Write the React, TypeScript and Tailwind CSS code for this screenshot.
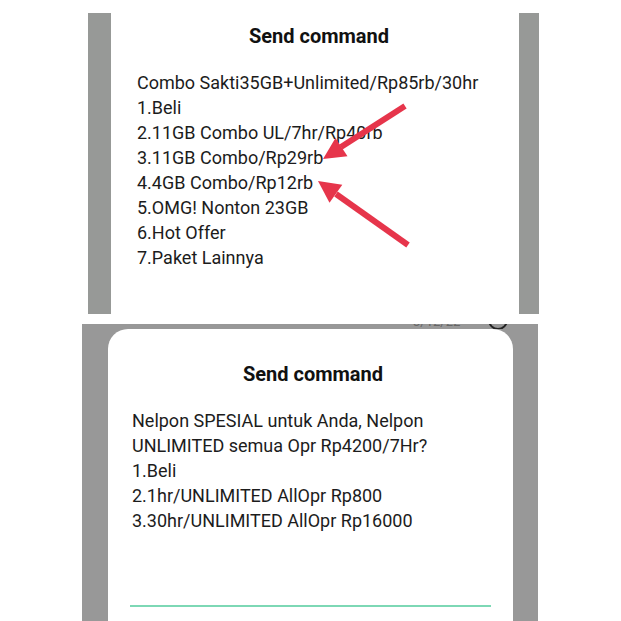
import React from 'react';

const font = { fontFamily: 'Roboto, "Noto Sans", Arial, sans-serif' };

const topLines = [
    'Combo Sakti35GB+Unlimited/Rp85rb/30hr',
    '1.Beli',
    '2.11GB Combo UL/7hr/Rp40rb',
    '3.11GB Combo/Rp29rb',
    '4.4GB Combo/Rp12rb',
    '5.OMG! Nonton 23GB',
    '6.Hot Offer',
    '7.Paket Lainnya',
];

const bottomLines = [
    'Nelpon SPESIAL untuk Anda, Nelpon',
    'UNLIMITED semua Opr Rp4200/7Hr?',
    '1.Beli',
    '2.1hr/UNLIMITED AllOpr Rp800',
    '3.30hr/UNLIMITED AllOpr Rp16000',
];

const App: React.FC = () => {
    return (
        <div className="relative w-[621px] h-[621px] overflow-hidden bg-white" style={font}>
            {/* Top screenshot */}
            <div className="pt-[13px] pl-[88px]">
                <div className="flex w-[451px] h-[301px]">
                    <div className="w-[23px] bg-[#979997]" />
                    <div className="flex-1 bg-white pt-[9px]">
                        <h2 className="text-center text-[20px] leading-[28px] font-bold text-[#111] pl-[8px]">Send command</h2>
                        <div className="mt-5 pl-[26px] text-[18px] leading-[25px] text-[#1c1c1c]">
                            {topLines.map((l) => (
                                <div key={l}>{l}</div>
                            ))}
                        </div>
                    </div>
                    <div className="w-[20px] bg-[#979997]" />
                </div>
            </div>

            {/* Bottom screenshot */}
            <div className="mt-[10px] pl-[82px]">
                <div className="flex flex-col w-[456px] h-[297px] bg-[#989898]">
                    <div className="relative h-[5px] overflow-hidden">
                        <span className="absolute left-[331px] top-[-9px] text-[13px] leading-[14px] text-[#666]">3/12/22</span>
                        <span className="absolute left-[406px] top-[-14px] w-[20px] h-[20px] rounded-full border-2 border-[#222]" />
                    </div>
                    <div className="flex flex-1">
                        <div className="w-[26px]" />
                        <div className="flex-1 bg-white rounded-t-[20px] pt-[31px]">
                            <h2 className="text-center text-[20px] leading-[28px] font-bold text-[#111] pl-[5px]">Send command</h2>
                            <div className="mt-5 pl-[24px] text-[18px] leading-[25px] text-[#1c1c1c]">
                                {bottomLines.map((l) => (
                                    <div key={l}>{l}</div>
                                ))}
                            </div>
                            <div className="mt-[72px] mx-[22px] h-[2px] bg-[#7dd8b5]" />
                        </div>
                        <div className="w-[25px]" />
                    </div>
                </div>
            </div>

            {/* Red annotation arrows */}
            <svg className="absolute inset-0 pointer-events-none" width="621" height="621" viewBox="0 0 621 621">
                <line x1="405" y1="106" x2="341" y2="147" stroke="#e6354b" strokeWidth="6" />
                <polygon points="323,159 347.5,156.3 335.5,137.9" fill="#e6354b" />
                <line x1="408" y1="245" x2="336" y2="194" stroke="#e6354b" strokeWidth="6" />
                <polygon points="318,181 342.3,184.8 329.5,202.8" fill="#e6354b" />
            </svg>
        </div>
    );
};

export default App;
